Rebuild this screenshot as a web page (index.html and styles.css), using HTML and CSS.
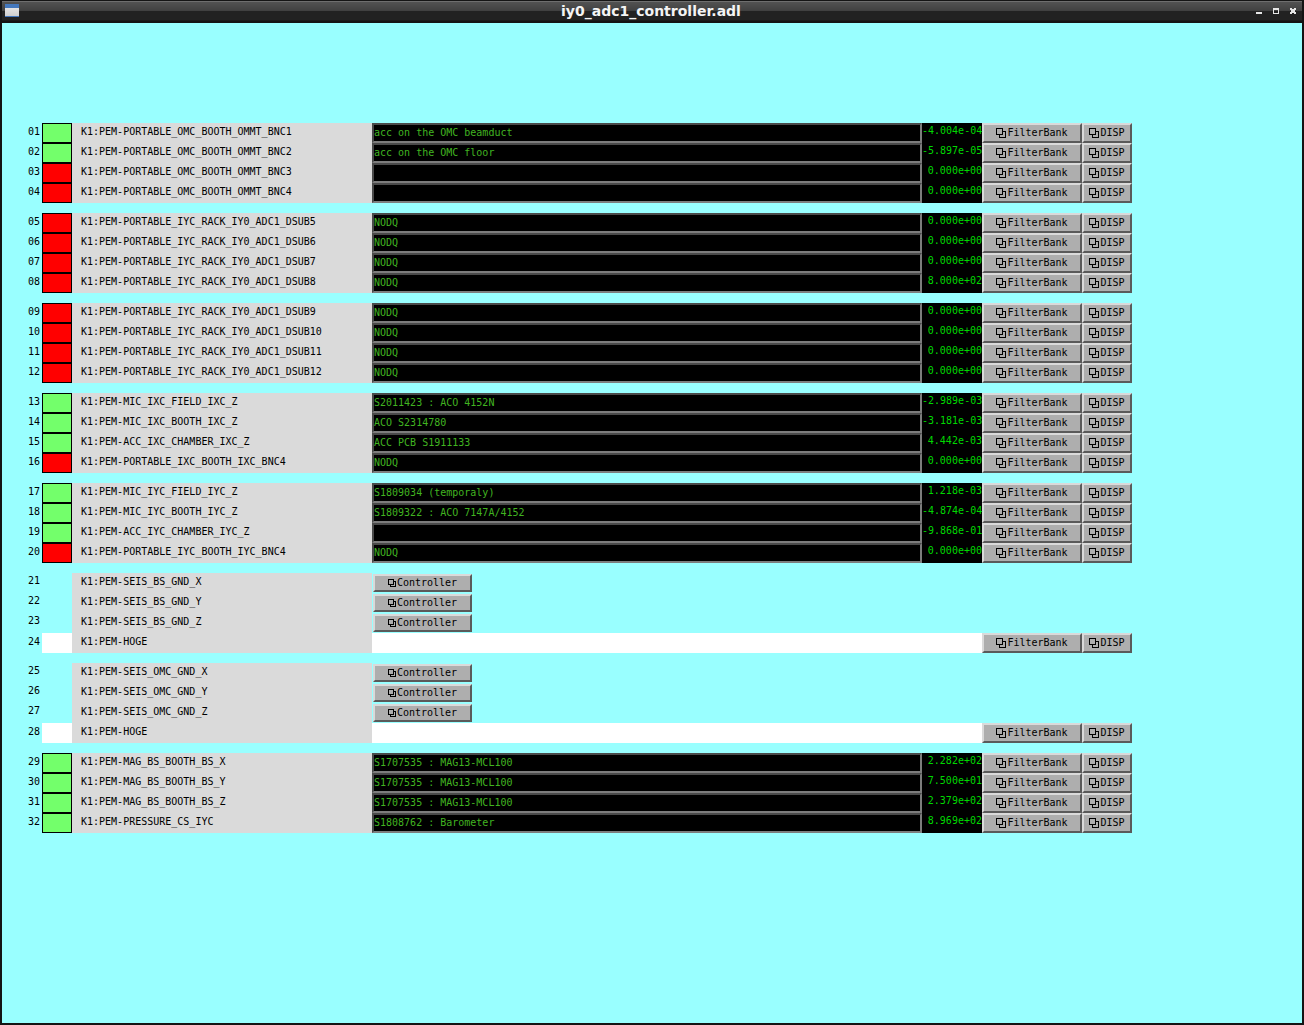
FILE: index.html
```html
<!DOCTYPE html>
<html lang="en">
<head>
    <meta charset="UTF-8">
    <meta name="viewport" content="width=device-width, initial-scale=1.0">
    <title>iy0_adc1_controller.adl</title>
    <link rel="stylesheet" href="styles.css">
</head>
<body>
    <div class="window">
        <header class="titlebar">
            <div class="titlebar-side"><span class="app-icon"></span></div>
            <h1>iy0_adc1_controller.adl</h1>
            <div class="titlebar-side window-buttons">
                <button type="button" aria-label="Minimize"><svg width="8" height="8" shape-rendering="crispEdges"><path d="M1 5h6v2H1z"/></svg></button>
                <button type="button" aria-label="Maximize"><svg width="8" height="8" shape-rendering="crispEdges"><path fill-rule="evenodd" d="M1 1h6v6H1zM2 3v3h4V3z"/></svg></button>
                <button type="button" aria-label="Close"><svg width="8" height="8" shape-rendering="crispEdges"><path d="M1 1h2v1h2V1h2v2H6v2h1v2H5V6H3v1H1V5h1V3H1z"/></svg></button>
            </div>
        </header>
        <main class="panel">
            <table class="channels">
                <colgroup>
                    <col class="col-number">
                    <col class="col-lamp">
                    <col class="col-name">
                    <col>
                    <col class="col-value">
                    <col class="col-filter">
                    <col class="col-disp">
                </colgroup>
            </table>
        </main>
    </div>
    <script src="channels.js"></script>
</body>
</html>
```
FILE: channels.js
```js
// [name, state, description, value]
const groups = [
    [
        ['PORTABLE_OMC_BOOTH_OMMT_BNC1', 'on', 'acc on the OMC beamduct', '-4.004e-04'],
        ['PORTABLE_OMC_BOOTH_OMMT_BNC2', 'on', 'acc on the OMC floor', '-5.897e-05'],
        ['PORTABLE_OMC_BOOTH_OMMT_BNC3', 'off', '', '0.000e+00'],
        ['PORTABLE_OMC_BOOTH_OMMT_BNC4', 'off', '', '0.000e+00'],
    ],
    [
        ['PORTABLE_IYC_RACK_IY0_ADC1_DSUB5', 'off', 'NODQ', '0.000e+00'],
        ['PORTABLE_IYC_RACK_IY0_ADC1_DSUB6', 'off', 'NODQ', '0.000e+00'],
        ['PORTABLE_IYC_RACK_IY0_ADC1_DSUB7', 'off', 'NODQ', '0.000e+00'],
        ['PORTABLE_IYC_RACK_IY0_ADC1_DSUB8', 'off', 'NODQ', '8.000e+02'],
    ],
    [
        ['PORTABLE_IYC_RACK_IY0_ADC1_DSUB9', 'off', 'NODQ', '0.000e+00'],
        ['PORTABLE_IYC_RACK_IY0_ADC1_DSUB10', 'off', 'NODQ', '0.000e+00'],
        ['PORTABLE_IYC_RACK_IY0_ADC1_DSUB11', 'off', 'NODQ', '0.000e+00'],
        ['PORTABLE_IYC_RACK_IY0_ADC1_DSUB12', 'off', 'NODQ', '0.000e+00'],
    ],
    [
        ['MIC_IXC_FIELD_IXC_Z', 'on', 'S2011423 : ACO 4152N', '-2.989e-03'],
        ['MIC_IXC_BOOTH_IXC_Z', 'on', 'ACO S2314780', '-3.181e-03'],
        ['ACC_IXC_CHAMBER_IXC_Z', 'on', 'ACC PCB S1911133', '4.442e-03'],
        ['PORTABLE_IXC_BOOTH_IXC_BNC4', 'off', 'NODQ', '0.000e+00'],
    ],
    [
        ['MIC_IYC_FIELD_IYC_Z', 'on', 'S1809034 (temporaly)', '1.218e-03'],
        ['MIC_IYC_BOOTH_IYC_Z', 'on', 'S1809322 : ACO 7147A/4152', '-4.874e-04'],
        ['ACC_IYC_CHAMBER_IYC_Z', 'on', '', '-9.868e-01'],
        ['PORTABLE_IYC_BOOTH_IYC_BNC4', 'off', 'NODQ', '0.000e+00'],
    ],
    [
        ['SEIS_BS_GND_X', 'controller'],
        ['SEIS_BS_GND_Y', 'controller'],
        ['SEIS_BS_GND_Z', 'controller'],
        ['HOGE', 'unused'],
    ],
    [
        ['SEIS_OMC_GND_X', 'controller'],
        ['SEIS_OMC_GND_Y', 'controller'],
        ['SEIS_OMC_GND_Z', 'controller'],
        ['HOGE', 'unused'],
    ],
    [
        ['MAG_BS_BOOTH_BS_X', 'on', 'S1707535 : MAG13-MCL100', '2.282e+02'],
        ['MAG_BS_BOOTH_BS_Y', 'on', 'S1707535 : MAG13-MCL100', '7.500e+01'],
        ['MAG_BS_BOOTH_BS_Z', 'on', 'S1707535 : MAG13-MCL100', '2.379e+02'],
        ['PRESSURE_CS_IYC', 'on', 'S1808762 : Barometer', '8.969e+02'],
    ],
];

const bigIcon = '<svg width="10" height="10" shape-rendering="crispEdges"><path d="M0.5 0.5h6v6h-6zM7 3.5h2.5v6h-6V7"/></svg>';
const smallIcon = '<svg width="8" height="8" shape-rendering="crispEdges"><path d="M0.5 0.5h5v5h-5zM6 2.5h1.5v5h-5V6"/></svg>';

function button(text, icon) {
    return `<button type="button" class="related">${icon}${text}</button>`;
}

function middleCells(id, state, description, value) {
    if (state === 'controller') {
        return `<td colspan="4" class="controller">${button('Controller', smallIcon)}</td>`;
    }
    const links = `<td>${button('FilterBank', bigIcon)}</td><td>${button('DISP', bigIcon)}</td>`;
    if (state === 'unused') {
        return `<td colspan="2" class="blank"></td>${links}`;
    }
    return `
        <td><input type="text" class="description" aria-labelledby="${id}" value="${description}"></td>
        <td class="value">${value}</td>
        ${links}
    `;
}

const table = document.querySelector('.channels');
let number = 0;
groups.forEach(group => {
    const body = document.createElement('tbody');
    group.forEach(([name, state, description, value]) => {
        number++;
        const id = `channel${number}`;
        const row = document.createElement('tr');
        row.className = state;
        row.innerHTML = `
            <td class="number">${String(number).padStart(2, '0')}</td>
            <td class="lamp"></td>
            <th scope="row" class="name" id="${id}">K1:PEM-${name}</th>
            ${middleCells(id, state, description, value)}
        `;
        body.appendChild(row);
    });
    table.appendChild(body);
});
```
FILE: styles.css
```css
* {
    box-sizing: border-box;
}
body {
    margin: 0;
    background-color: #99ffff;
    font-family: "DejaVu Sans Mono", "Liberation Mono", monospace;
    font-size: 10px;
    line-height: 16px;
    color: #000;
}
.window {
    min-height: 100vh;
    display: flex;
    flex-direction: column;
    border: 2px solid #141414;
    border-top: none;
}
.titlebar {
    display: flex;
    align-items: center;
    justify-content: space-between;
    height: 23px;
    padding: 0 5px 2px 3px;
    background: linear-gradient(#141414 0 1px, #6e6e6e 1px 2px, #525252 2px, #404040 11px, #222 11px, #222 20px, #141414 21px);
}
.titlebar h1 {
    margin: 0;
    font-family: "DejaVu Sans", sans-serif;
    font-size: 14px;
    line-height: 16px;
    color: #f4f4f4;
}
.titlebar-side {
    display: flex;
    width: 60px;
}
.app-icon {
    width: 14px;
    height: 13px;
    background: linear-gradient(#4478bd 0 4px, #e4e4e4 4px, #cfcfcf 12px, #4478bd 12px);
}
.window-buttons {
    justify-content: flex-end;
    gap: 9px;
}
.window-buttons button {
    display: block;
    width: 8px;
    height: 8px;
    padding: 0;
    border: none;
    background: none;
}
.window-buttons svg {
    display: block;
    fill: #e6e6e6;
}
.panel {
    flex: 1;
    padding: 100px 170px 100px 18px;
}
.channels {
    width: 100%;
    table-layout: fixed;
    border-collapse: collapse;
}
.col-number {
    width: 22px;
}
.col-lamp {
    width: 30px;
}
.col-name {
    width: 300px;
}
.col-value {
    width: 60px;
}
.col-filter {
    width: 100px;
}
.col-disp {
    width: 50px;
}
.channels tr {
    height: 20px;
}
.channels tbody + tbody::before {
    content: "";
    display: table-row;
    height: 10px;
}
.channels td, .channels th {
    height: 20px;
    padding: 0;
    vertical-align: top;
    white-space: nowrap;
}
.channels .number {
    padding: 1px 2px 0 0;
    text-align: right;
}
.controller .number {
    padding-top: 0;
}
.on .lamp, .off .lamp {
    box-shadow: inset 0 0 0 1px #000;
}
.on .lamp {
    background-color: #73ff6b;
}
.off .lamp {
    background-color: #ff0000;
}
.unused .lamp, .blank {
    background-color: #fff;
}
.channels .name {
    padding: 1px 0 0 9px;
    background-color: #dadada;
    font-weight: normal;
    text-align: left;
}
.description {
    display: block;
    width: 100%;
    height: 20px;
    padding: 0 0 2px;
    border: 2px solid;
    border-color: #4a4a4a #7d7d7d #7d7d7d #4a4a4a;
    border-radius: 0;
    background-color: #000;
    color: #40b420;
    font: inherit;
}
.value {
    background-color: #000;
    color: #00d800;
    text-align: right;
}
.related {
    display: flex;
    align-items: center;
    justify-content: center;
    gap: 1px;
    width: 100%;
    height: 20px;
    padding: 0;
    border: 2px solid;
    border-color: #dadada #5a5a5a #5a5a5a #dadada;
    border-radius: 0;
    background-color: #aeaeae;
    color: #000;
    font: inherit;
}
.related svg {
    fill: none;
    stroke: #000;
}
td.controller {
    padding: 1px;
}
td.controller .related {
    width: 99px;
    height: 18px;
}
```
